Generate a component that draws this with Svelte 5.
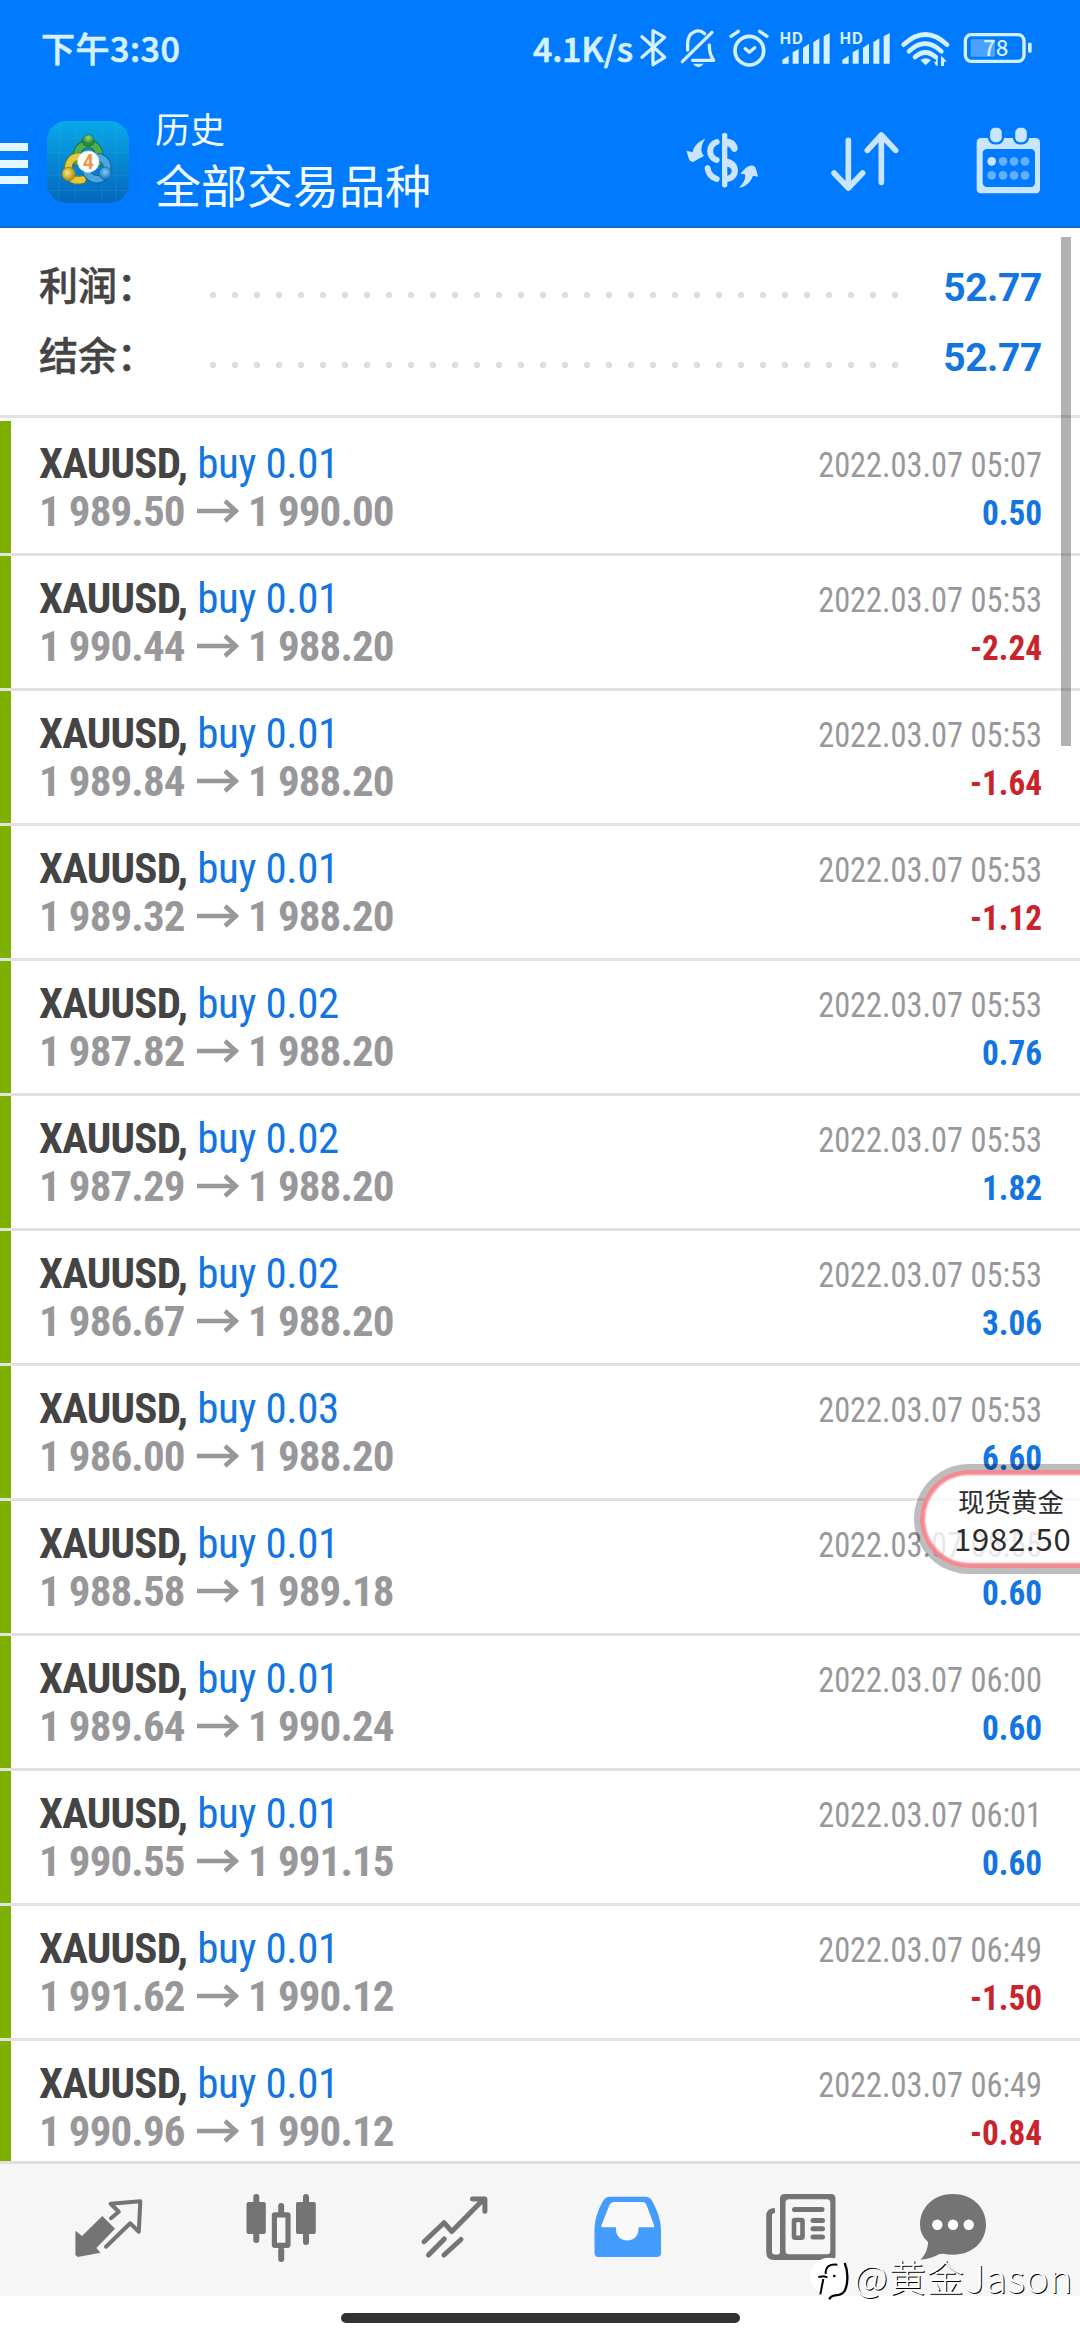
<script lang="ts">
	interface Deal {
		volume: string;
		open: string;
		close: string;
		time: string;
		profit: string;
	}

	const summary = [
		{ label: '利润：', value: '52.77' },
		{ label: '结余：', value: '52.77' }
	];

	const deals: Deal[] = [
		{ volume: '0.01', open: '1 989.50', close: '1 990.00', time: '2022.03.07 05:07', profit: '0.50' },
		{ volume: '0.01', open: '1 990.44', close: '1 988.20', time: '2022.03.07 05:53', profit: '-2.24' },
		{ volume: '0.01', open: '1 989.84', close: '1 988.20', time: '2022.03.07 05:53', profit: '-1.64' },
		{ volume: '0.01', open: '1 989.32', close: '1 988.20', time: '2022.03.07 05:53', profit: '-1.12' },
		{ volume: '0.02', open: '1 987.82', close: '1 988.20', time: '2022.03.07 05:53', profit: '0.76' },
		{ volume: '0.02', open: '1 987.29', close: '1 988.20', time: '2022.03.07 05:53', profit: '1.82' },
		{ volume: '0.02', open: '1 986.67', close: '1 988.20', time: '2022.03.07 05:53', profit: '3.06' },
		{ volume: '0.03', open: '1 986.00', close: '1 988.20', time: '2022.03.07 05:53', profit: '6.60' },
		{ volume: '0.01', open: '1 988.58', close: '1 989.18', time: '2022.03.07 05:55', profit: '0.60' },
		{ volume: '0.01', open: '1 989.64', close: '1 990.24', time: '2022.03.07 06:00', profit: '0.60' },
		{ volume: '0.01', open: '1 990.55', close: '1 991.15', time: '2022.03.07 06:01', profit: '0.60' },
		{ volume: '0.01', open: '1 991.62', close: '1 990.12', time: '2022.03.07 06:49', profit: '-1.50' },
		{ volume: '0.01', open: '1 990.96', close: '1 990.12', time: '2022.03.07 06:49', profit: '-0.84' }
	];
</script>

{#snippet signal()}
	<svg width="60" height="60" viewBox="325 0 180 180">
		<text x="329" y="71" font-size="46" font-weight="700" textLength="71" lengthAdjust="spacingAndGlyphs">HD</text>
		<path d="M338 131v-12l19-12v24zM369 131V97l18-10v44zM400 131V83l18-12v60zM431 131V67l18-12v76zM462 131V49l18-10v92z" />
	</svg>
{/snippet}

<div class="screen">
	<header>
		<div class="status">
			<span class="clock">下午3:30</span>
			<span class="speed">4.1K/s</span>
			<svg width="38" height="60" viewBox="-114 0 114 180">
				<path class="line" stroke-width="10" d="M-84 50l68 62-35 22V32l35 20-68 60" />
			</svg>
			<svg width="53.3" height="60" viewBox="0 0 160 180">
				<path class="line" stroke-width="10" d="M37 125l89-88M53 90V71c0-38 34-46 51-30M118 75c0 24 4 33 13 46H68" />
				<path d="M69 131h32q-16 22-32 0z" />
			</svg>
			<svg width="55" height="60" viewBox="160 0 165 180">
				<circle class="line" stroke-width="11" cx="239" cy="92" r="43" />
				<path class="line" stroke-width="10" d="M227 86l12 11 16-14M184 49l22-15M292 49l-22-15" />
			</svg>
			{@render signal()}
			{@render signal()}
			<svg width="65" height="60" viewBox="685 0 195 180">
				<path class="line" stroke-width="14" stroke-linecap="butt" d="M702 74q65-61 130 0M718 94q48-46 97 0M736 111q31-27 62 0" />
				<path d="M752 120q16-11 32 0l-16 16zM804 109v30q-8-4-11-14h6v-16zM814 138v-30q9 5 17 17h-8v13z" />
			</svg>
			<svg width="70" height="60" viewBox="880 0 210 180">
				<rect class="line" stroke-width="10" x="887" y="44" width="176" height="80" rx="18" />
				<rect x="903" y="58" width="73" height="52" rx="5" opacity=".35" />
				<rect x="1075" y="68" width="11" height="30" rx="4" />
				<text x="940" y="108" font-size="66" font-weight="500" textLength="76" lengthAdjust="spacingAndGlyphs">78</text>
			</svg>
		</div>

		<div class="toolbar">
			<div class="menu"><i></i><i></i><i></i></div>
			<svg class="logo" width="82" height="82" viewBox="22 17 246 246">
				<defs>
					<linearGradient id="tile" x2="0" y2="1">
						<stop offset="0" stop-color="#08a9e8" />
						<stop offset="1" stop-color="#0566bd" />
					</linearGradient>
					<radialGradient id="leaf" cx=".5" cy=".25">
						<stop offset="0" stop-color="#9bd77c" />
						<stop offset="1" stop-color="#2a8a3c" />
					</radialGradient>
					<radialGradient id="gold" cx=".4" cy=".4">
						<stop offset="0" stop-color="#f6ea7b" />
						<stop offset="1" stop-color="#bb991c" />
					</radialGradient>
					<radialGradient id="sky" cx=".5" cy=".4">
						<stop offset="0" stop-color="#83cdf1" />
						<stop offset="1" stop-color="#2381c8" />
					</radialGradient>
				</defs>
				<rect x="22" y="17" width="246" height="246" rx="58" fill="url(#tile)" />
				<path d="M58 20v240M107 20v240M187 20v240M229 20v240M24 68h242M24 112h242M24 180h242M24 225h242" fill="none" stroke="#37b5e4" stroke-width="1.5" opacity=".4" />
				<g fill="none" stroke-linecap="round">
					<path d="M113 140c-6-34 8-53 33-54 25 1 38 22 32 54" stroke="#1d6a3c" stroke-width="25" />
					<path d="M113 140c-6-34 8-53 33-54 25 1 38 22 32 54" stroke="#4fae50" stroke-width="20" />
					<path d="M116 124c-24 2-33 22-30 50 8 23 24 22 42 19" stroke="#7f7420" stroke-width="25" />
					<path d="M116 124c-24 2-33 22-30 50 8 23 24 22 42 19" stroke="#dfcb3c" stroke-width="20" />
					<path d="M180 126c24 10 27 30 18 50-16 24-42 18-56-2" stroke="#155a93" stroke-width="25" />
					<path d="M180 126c24 10 27 30 18 50-16 24-42 18-56-2" stroke="#4ba7e0" stroke-width="20" />
				</g>
				<circle cx="146" cy="76" r="18" fill="url(#leaf)" stroke="#1d6a3c" stroke-width="2" />
				<circle cx="87" cy="176" r="20" fill="url(#gold)" stroke="#7f7420" stroke-width="2" />
				<circle cx="196" cy="174" r="19" fill="url(#sky)" stroke="#155a93" stroke-width="2" />
				<circle cx="146" cy="139" r="32" fill="#fff" stroke="#d7e4e6" stroke-width="2" />
				<text x="129" y="160" font-size="58" font-weight="700" fill="#ef9545">4</text>
			</svg>
			<div class="titles">
				<span class="caption">历史</span>
				<span class="title">全部交易品种</span>
			</div>
			<svg width="140" height="100" viewBox="30 0 420 300">
				<path d="M156 58q8-9 16 0v13c16 1 27 9 31 26q1 13-9 14-9 0-13-11-4-6-9-6v37c20 3 32 18 32 35 0 19-13 33-32 35v12q-8 9-16 0z" />
				<path fill="#007aff" d="M172 155c7 1 12 5 13 12 0 7-5 13-13 15z" />
				<path class="line" stroke-width="18" stroke-linecap="butt" d="M140 81c-26 8-26 45 0 54M113 160c2 16 10 26 27 32" />
				<path d="M106 71c-12 16-14 34-9 45l5 7-19 10-13 8q-10 0-13-8l-8-26 19 5c3-20 19-34 38-41zM207 219c18-20 21-32 17-41l-13-2 16-17q12-9 23-7 7 3 9 13l5 20-15-3c-7 20-21 32-42 37z" />
			</svg>
			<svg width="140" height="100" viewBox="450 0 420 300">
				<path class="line" stroke-width="17" d="M535 76v142m-43-44l43 45 43-45M634 202V61m-42 45l42-46 43 46" />
			</svg>
			<svg width="120" height="100" viewBox="870 0 360 300">
				<path fill-rule="evenodd" d="M934 69h162q14 0 14 14v138q0 14-14 14H934q-14 0-14-14V83q0-14 14-14zm18 33q-14 0-14 14v86q0 14 14 14h130q13 0 13-14v-86q0-14-13-14z" />
				<g stroke="#007aff" stroke-width="7">
					<rect x="957" y="35" width="42" height="50" rx="18" />
					<rect x="1032" y="35" width="42" height="50" rx="18" />
				</g>
				<circle cx="965" cy="139" r="13" />
				<g opacity=".5">
					<circle cx="999" cy="139" r="13" /><circle cx="1032" cy="139" r="13" /><circle cx="1065" cy="139" r="13" />
					<circle cx="965" cy="181" r="13" /><circle cx="999" cy="181" r="13" /><circle cx="1032" cy="181" r="13" /><circle cx="1065" cy="181" r="13" />
				</g>
			</svg>
		</div>
	</header>

	<section class="summary">
		{#each summary as item}
			<div class="total">
				<span class="label">{item.label}</span>
				<span class="dots"></span>
				<span class="value">{item.value}</span>
			</div>
		{/each}
	</section>

	<main>
		{#each deals as deal}
			<div class="deal">
				<div class="left">
					<div class="symbol"><b>XAUUSD,</b> <span>buy {deal.volume}</span></div>
					<div class="prices">
						<span>{deal.open}</span>
						<svg width="42" height="24" viewBox="0 0 42 24">
							<path d="M0 12h38M28 2l11 10-11 10" />
						</svg>
						<span>{deal.close}</span>
					</div>
				</div>
				<div class="right">
					<div class="time">{deal.time}</div>
					<div class="profit" class:loss={deal.profit.startsWith('-')}>{deal.profit}</div>
				</div>
			</div>
		{/each}
	</main>

	<nav>
		<svg viewBox="0 84 180 132">
			<path d="M102.3 136L115 148.7 96.4 168l4.1 4.7L77.8 177l-2.4-2v-24.3l6.6 5.3z" />
			<path class="line" stroke-width="4" d="M111 138.3l7.8-6.6-8.2-8 29.7-2.4-1.5 30.4-8.6-8.4L106 166.7" />
		</svg>
		<svg viewBox="180 84 180 132">
			<rect x="246.5" y="122" width="19.3" height="32" rx="2" /><rect x="253.3" y="114" width="6" height="49" rx="3" />
			<rect x="296" y="122" width="19.8" height="32" rx="2" /><rect x="303" y="114" width="6" height="51" rx="3" />
			<rect class="line" stroke-width="5.2" x="274.4" y="134.8" width="13.6" height="30.5" rx=".5" />
			<rect x="278.2" y="123" width="6" height="11" rx="3" /><rect x="278.2" y="167" width="6" height="15" rx="3" />
		</svg>
		<svg viewBox="360 84 180 132">
			<path class="line" stroke-width="5" d="M424 161.7l20-19 7.8 8.8 32-32.5M472.5 119h12.4v12.3M428.5 175l15.8-16M444 175l17-15.5" />
		</svg>
		<svg class="active" viewBox="540 84 180 132">
			<path d="M610 116.7h35q5 0 7 4c6 11 9 20 9 31V173q0 4-4 4h-58.5q-4 0-4-4v-22c0-11 3-20 8.5-30q2.5-4.3 7-4.3z" />
			<path fill="#f9f9f9" d="M614.5 122h28q3 0 4 3l7.5 20q1 2.3-1.5 2.3h-14v2c0 15-22.5 15-22.5 0v-2h-13q-2.5 0-1.5-2.3l8-20q1.5-3 5-3z" />
		</svg>
		<svg viewBox="720 84 180 132">
			<path fill-rule="evenodd" d="M785 114h46q4.5 0 4.5 4.5v57q0 4.5-4.5 4.5h-57q-7.8 0-7.8-8v-36q0-8 8.8-8v5q-3 0-3 3v36q0 2.5 3 2.5h2.5q2.5 0 2.5-2.5v-53.5q0-4.5 5-4.5zm4 5.3q-3.5 0-3.5 3.5v48q0 3.5 3.5 3.5h38q3.3 0 3.3-3.5v-48q0-3.5-3.3-3.5z" />
			<path class="line" stroke-width="5" d="M794.5 129.5h27.5M813 140.5h9.5M813 148.7h9.5M813 157h9.5" />
			<rect class="line" stroke-width="4.6" x="794" y="140" width="8.5" height="17.7" rx="1" />
		</svg>
		<svg viewBox="900 84 180 132">
			<path d="M953 114c19 0 33 13 33 30.5s-14 30.2-33 30.2q-5 0-9.5-.9l-4 .2q-8 4.7-19 5.7 7-7 7.7-17.5-8.2-7-8.2-17.7c0-17.5 14-30.5 33-30.5z" />
			<g fill="#fff"><circle cx="937.3" cy="144.7" r="5.2" /><circle cx="953" cy="144.7" r="5.2" /><circle cx="968.7" cy="144.7" r="5.2" /></g>
		</svg>
	</nav>
	<footer><div class="handle"></div></footer>

	<div class="scrollbar"></div>
	<div class="floating">
		<div class="name">现货黄金</div>
		<div class="quote">1982.50</div>
	</div>
	<div class="watermark">
		<svg width="44" height="48" viewBox="30 235 132 144">
			<circle cx="88" cy="300" r="57" fill="#fff" />
			<g fill="none" stroke="#000" stroke-width="6">
				<path d="M112 264c-22-3-36 5-35 28M55 301l16-2 11 3M70 307l-9 46" />
				<path stroke-width="7" d="M134 259c12 27 10 66-1 85q-8 11-27 12-14 1-18 12" />
			</g>
			<circle cx="103" cy="298" r="4" />
		</svg>
		<span class="author">@黄金</span><span class="latin">Jason</span>
	</div>
</div>

<style>
	:global(body) {
		background: #fff;
	}

	.screen {
		position: relative;
		width: 1080px;
		height: 2340px;
		overflow: hidden;
		display: flex;
		flex-direction: column;
		background: #fff;
		font-family: Roboto, "Noto Sans CJK SC", sans-serif;
		white-space: nowrap;
	}

	svg {
		display: block;
		flex: none;
	}

	.line {
		stroke: currentColor;
		stroke-linecap: round;
		stroke-linejoin: round;
	}

	header {
		flex: none;
		box-sizing: border-box;
		height: 228px;
		padding-top: 20px;
		border-bottom: 2px solid #146bd2;
		background: #007aff;
		color: #d5f1ff;
	}

	header svg {
		fill: currentColor;
	}

	header .line,
	nav .line {
		fill: none;
	}

	.status {
		display: flex;
		height: 60px;
		line-height: 55px;
		font-family: "Noto Sans CJK SC", sans-serif;
		font-weight: 500;
		font-size: 34px;
	}

	.clock,
	.speed {
		flex: none;
		-webkit-text-stroke: 0.7px currentColor;
	}

	.clock {
		width: 533px;
		padding-left: 41px;
		box-sizing: border-box;
		letter-spacing: 0.5px;
	}

	.speed {
		width: 99px;
		letter-spacing: -0.2px;
	}

	.toolbar {
		display: flex;
		height: 146px;
		color: #c9e5ff;
		padding-top: 35px;
		box-sizing: border-box;
	}

	.menu {
		display: flex;
		flex-direction: column;
		gap: 8.5px;
		width: 47px;
		padding-top: 28px;
	}

	.menu i {
		width: 27.5px;
		height: 8px;
		background: #e6f6ff;
	}

	.logo {
		margin-top: 6px;
	}

	.titles {
		display: flex;
		flex-direction: column;
		width: 551px;
		margin-top: -4px;
		padding-left: 26px;
		box-sizing: border-box;
		color: #f2fbff;
		font-family: "Noto Sans CJK SC", sans-serif;
		font-weight: 400;
	}

	.caption {
		font-size: 35px;
		line-height: 34px;
	}

	.title {
		font-size: 46px;
		line-height: 76px;
	}

	.summary {
		flex: none;
		box-sizing: border-box;
		height: 190px;
		padding: 22px 38px 0 39px;
		border-bottom: 3px solid #e2e2e3;
	}

	.total {
		display: flex;
		height: 70px;
	}

	.label {
		width: 163px;
		color: #444;
		font-family: "Noto Sans CJK SC", sans-serif;
		font-weight: 500;
		font-size: 39px;
		line-height: 67px;
		-webkit-text-stroke: 0.5px currentColor;
	}

	.dots {
		width: 704px;
		height: 22px;
		margin-top: 34px;
		background: radial-gradient(circle, #dedede 2.8px, transparent 3.8px) 0 0 / 22px 22px;
	}

	.value {
		flex: 1;
		text-align: right;
		color: #1275e2;
		font-weight: 700;
		font-size: 39px;
		line-height: 76px;
		letter-spacing: -0.4px;
	}

	main {
		height: 1743px;
		padding-top: 3px;
		box-sizing: border-box;
		overflow: hidden;
	}

	.deal {
		display: flex;
		justify-content: space-between;
		box-sizing: border-box;
		height: 135px;
		padding: 0 38px 0 28px;
		border-bottom: 3px solid #e2e2e3;
		position: relative;
		font-family: "Roboto Condensed", sans-serif;
		line-height: 48px;
	}

	.deal::before {
		content: "";
		position: absolute;
		inset: 0 auto 0 0;
		width: 11px;
		background: #7db000;
	}

	.left {
		padding: 18px 0 0 11px;
		font-size: 43px;
	}

	.symbol b {
		color: #444;
		letter-spacing: -0.8px;
	}

	.symbol span {
		color: #1275e2;
		letter-spacing: -0.4px;
	}

	.prices {
		display: flex;
		align-items: center;
		color: #98989a;
		font-weight: 700;
		letter-spacing: -0.9px;
	}

	.prices svg {
		margin: 0 9.5px 0 12px;
	}

	.prices path {
		fill: none;
		stroke: currentColor;
		stroke-width: 4.5;
	}

	.right {
		padding-top: 21px;
		font-size: 35px;
		text-align: right;
	}

	.time {
		color: #98989a;
		transform: scaleX(0.925);
		transform-origin: right;
	}

	.profit {
		color: #1275e2;
		font-weight: 700;
		transform: scaleX(0.95);
		transform-origin: right;
	}

	.profit.loss {
		color: #c9242b;
	}

	nav {
		flex: none;
		display: grid;
		grid-template-columns: repeat(6, 180px);
		height: 132px;
		border-top: 3px solid #dfdfdf;
		background: #f6f6f6;
		color: #747474;
	}

	nav svg {
		width: 180px;
		height: 132px;
		fill: currentColor;
	}

	nav .active {
		color: #449cfd;
	}

	footer {
		display: flex;
		justify-content: center;
		padding-top: 17px;
	}

	.handle {
		width: 399px;
		height: 10px;
		border-radius: 5px;
		background: #323232;
	}

	.scrollbar {
		position: absolute;
		top: 237px;
		right: 9px;
		width: 10px;
		height: 509px;
		background: rgba(0, 0, 0, 0.3);
	}

	.floating {
		position: absolute;
		top: 1464px;
		left: 914px;
		width: 220px;
		height: 110px;
		box-sizing: border-box;
		padding: 15px 0 0 37px;
		border: 6px solid rgba(0, 0, 0, 0.26);
		border-radius: 55px;
		background: rgba(255, 255, 255, 0.78);
		background-clip: padding-box;
		box-shadow: inset 0 0 2px 5px rgba(238, 110, 118, 0.8);
		color: #2c2c2c;
		font-family: "Noto Sans CJK SC", sans-serif;
	}

	.name {
		padding-left: 1px;
		font-size: 26.5px;
		line-height: 31px;
	}

	.quote {
		font-size: 31px;
		line-height: 44px;
		letter-spacing: 0.8px;
		margin-left: -3px;
	}

	.watermark {
		position: absolute;
		top: 2255px;
		left: 810px;
		display: flex;
		color: #fff;
		font-family: "Noto Sans CJK SC", sans-serif;
		font-weight: 300;
		font-size: 37px;
		line-height: 42px;
		text-shadow: 1px 1px 0 #000;
	}

	.author {
		letter-spacing: 1px;
	}

	.latin {
		font-size: 39px;
		letter-spacing: 0.6px;
	}
</style>
